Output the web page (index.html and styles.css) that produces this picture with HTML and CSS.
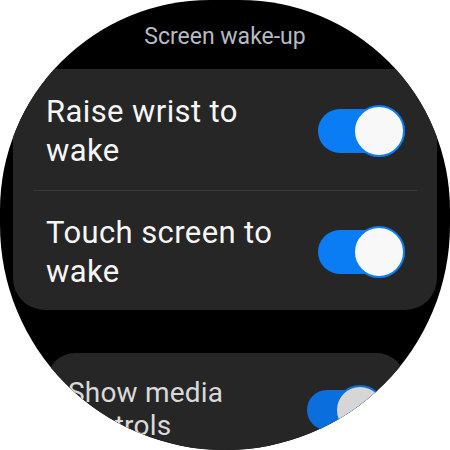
FILE: index.html
```html
<!DOCTYPE html>
<html>
<head>
<meta charset="utf-8">
<link rel="stylesheet" href="styles.css">
</head>
<body>
<div class="watch">
  <div class="title">Screen wake-up</div>
  <div class="card">
    <div class="row row-first">
      <div class="label">Raise wrist to wake</div>
      <div class="switch"><div class="knob"></div></div>
    </div>
    <div class="divider"></div>
    <div class="row row-second">
      <div class="label">Touch screen to wake</div>
      <div class="switch"><div class="knob"></div></div>
    </div>
  </div>
  <div class="card card-small">
    <div class="row row-small">
      <div class="label label-small">Show media controls</div>
      <div class="switch switch-small"><div class="knob knob-small"></div></div>
    </div>
  </div>
</div>
</body>
</html>
```
FILE: styles.css
```css
html, body {
  margin: 0;
  padding: 0;
  background: #ffffff;
}
.watch {
  width: 450px;
  height: 450px;
  background: #000000;
  border-radius: 210px 210px 225px 225px;
  overflow: hidden;
  font-family: Roboto, "Noto Sans", sans-serif;
}
.title {
  padding-top: 25px;
  height: 24px;
  line-height: 24px;
  font-size: 23px;
  color: #b6bac2;
  text-align: center;
  margin-bottom: 20px;
}
.card {
  margin: 0 13px;
  background: #262626;
  border-radius: 32px;
}
.row {
  display: flex;
  align-items: center;
  justify-content: space-between;
  padding: 23px 32px 20px 33px;
}
.row-second {
  padding: 22px 32px 19px 33px;
}
.label {
  font-size: 31px;
  line-height: 39px;
  letter-spacing: 0.4px;
  color: #f6f6f6;
  max-width: 250px;
}
.divider {
  height: 1px;
  margin: 0 20px;
  background: #3a3a3a;
}
.switch {
  flex-shrink: 0;
  position: relative;
  width: 87px;
  height: 44px;
  border-radius: 22px;
  background: #0b7df4;
}
.knob {
  position: absolute;
  right: 0;
  top: -4px;
  width: 48px;
  height: 48px;
  border: 2px solid #0b7df4;
  border-radius: 50%;
  background: #f8f8f8;
}
.card-small {
  margin: 43px 45px 0 47px;
  border-radius: 28px;
  height: 120px;
}
.row-small {
  padding: 23px 20px 0 21px;
  align-items: flex-start;
}
.label-small {
  font-size: 28px;
  line-height: 33px;
  letter-spacing: 0.2px;
  color: #d9d9d9;
  max-width: 200px;
}
.switch-small {
  margin-top: 14px;
  width: 78px;
  height: 40px;
  background: #0a6fdc;
}
.knob-small {
  top: -5px;
  width: 46px;
  height: 46px;
  border-color: #0a6fdc;
  background: #d6d6d6;
}
```
